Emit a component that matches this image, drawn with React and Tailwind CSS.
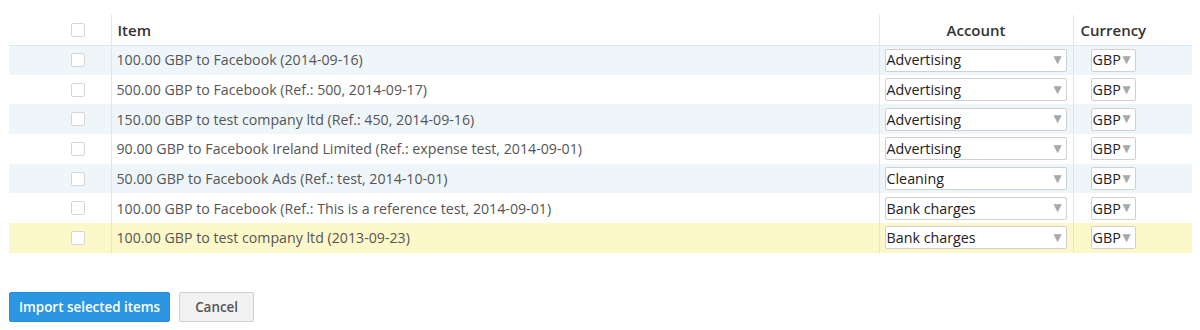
const rows = [
  { item: '100.00 GBP to Facebook (2014-09-16)', account: 'Advertising' },
  { item: '500.00 GBP to Facebook (Ref.: 500, 2014-09-17)', account: 'Advertising' },
  { item: '150.00 GBP to test company ltd (Ref.: 450, 2014-09-16)', account: 'Advertising' },
  { item: '90.00 GBP to Facebook Ireland Limited (Ref.: expense test, 2014-09-01)', account: 'Advertising' },
  { item: '50.00 GBP to Facebook Ads (Ref.: test, 2014-10-01)', account: 'Cleaning' },
  { item: '100.00 GBP to Facebook (Ref.: This is a reference test, 2014-09-01)', account: 'Bank charges' },
  { item: '100.00 GBP to test company ltd (2013-09-23)', account: 'Bank charges', highlight: true },
];

function Checkbox() {
  return <span className="block w-[14px] h-[14px] border border-[#d6d6d6] rounded-[2px] bg-white ml-[62px]" />;
}

function FakeSelect({ value, className }) {
  return (
    <div className={`flex items-center h-[23px] bg-white border border-[#d0d0d0] rounded-[2px] text-[14.3px] text-[#222] ${className}`}>
      <span className="flex-1 pl-[1px] whitespace-nowrap">{value}</span>
      <span className="text-[10.5px] text-[#a8a8a8] pr-[4px]" style={{ fontFamily: '"DejaVu Sans", sans-serif' }}>▼</span>
    </div>
  );
}

export default function App() {
  return (
    <div className="w-[1200px] h-[330px] bg-white pt-[15px] px-[9px]" style={{ fontFamily: '"Open Sans", "Liberation Sans", sans-serif' }}>
      <table className="w-[1183px] border-collapse table-fixed">
        <colgroup>
          <col className="w-[102px]" />
          <col className="w-[768px]" />
          <col className="w-[194px]" />
          <col className="w-[119px]" />
        </colgroup>
        <thead>
          <tr className="h-[30px] border-b border-[#d3e9f5]">
            <th className="p-0 align-middle"><Checkbox /></th>
            <th className="border-l border-[#d3e9f5] text-left pl-[6px] text-[15px] font-semibold text-[#333]">Item</th>
            <th className="border-l border-[#d3e9f5] text-center text-[15px] font-semibold text-[#333]">Account</th>
            <th className="border-l border-[#d3e9f5] text-left pl-[7px] text-[15px] font-semibold text-[#333]">Currency</th>
          </tr>
        </thead>
        <tbody>
          {rows.map((r, i) => (
            <tr
              key={i}
              className={`h-[29.7px] ${r.highlight ? 'bg-[#fdf8c9]' : i % 2 === 0 ? 'bg-[#eef6fa]' : 'bg-white'}`}
            >
              <td className="p-0 align-middle"><Checkbox /></td>
              <td className="border-l border-[#d3e9f5] pl-[5px] text-[14.2px] text-[#555] align-middle">{r.item}</td>
              <td className="border-l border-[#d3e9f5] pl-[5px] align-middle">
                <FakeSelect value={r.account} className="w-[182px]" />
              </td>
              <td className="border-l border-[#d3e9f5] pl-[17px] align-middle">
                <FakeSelect value="GBP" className="w-[45px]" />
              </td>
            </tr>
          ))}
        </tbody>
      </table>
      <div className="flex gap-[9px] mt-[39px]">
        <button className="h-[30px] px-[9px] bg-[#2b96e1] text-white text-[13.4px] font-semibold rounded-[2px] border border-[#2690d9]">
          Import selected items
        </button>
        <button className="h-[30px] px-[15px] bg-[#f2f2f2] text-[#555] text-[13.4px] font-semibold rounded-[2px] border border-[#cfcfcf]">
          Cancel
        </button>
      </div>
    </div>
  );
}
